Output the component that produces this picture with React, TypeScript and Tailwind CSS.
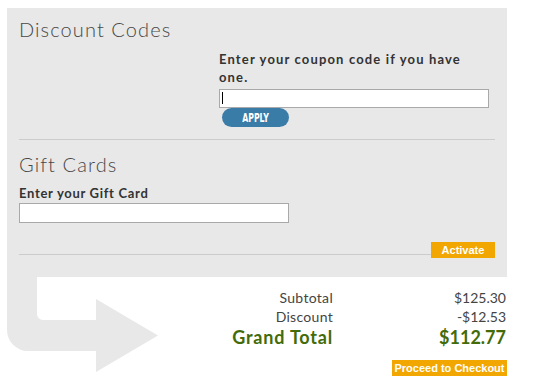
import React from "react";

const gothic = { fontFamily: "Lato, 'Open Sans', sans-serif" };

export default function App() {
  return (
    <div className="relative w-[536px] h-[384px] bg-white overflow-hidden" style={gothic}>
      <svg className="absolute left-0 top-[277px]" width="160" height="100" viewBox="0 0 160 100">
        <path
          d="M7 0 H37 V37 A6 6 0 0 0 43 43 H96 V22 L158 58.5 L96 95 V74 H28 A21 21 0 0 1 7 53 Z"
          fill="#e8e8e8"
        />
      </svg>

      <div className="relative ml-[7px] mt-[8px] w-[500px] bg-[#e8e8e8] px-[12px] pt-[9px] pb-[19px]">
        <h2 className="text-[20px] leading-[24px] tracking-[1.1px] text-[#474747] font-light">Discount Codes</h2>

        <div className="ml-[200px] mt-[9px] w-[270px]">
          <p className="w-[266px] text-[13px] leading-[18px] font-bold tracking-[1.15px] text-[#333]">
            Enter your coupon code if you have one.
          </p>
          <div className="relative mt-[3px]">
            <input
              type="text"
              className="block w-[270px] h-[19px] border border-[#a9a9a9] bg-white outline-none"
            />
            <span className="absolute left-[3px] top-[3px] w-[1px] h-[12px] bg-black" />
          </div>
          <button className="ml-[3px] flex h-[19px] w-[67px] items-center justify-center rounded-full bg-[#3a7ca8]">
            <span
              className="inline-block scale-x-[0.72] text-[12px] font-bold leading-none text-white"
              style={{ fontFamily: "'DejaVu Sans Condensed', 'DejaVu Sans', sans-serif" }}
            >
              APPLY
            </span>
          </button>
        </div>

        <div className="mt-[12px] h-px bg-[#cccccc]" />

        <h2 className="mt-[12px] text-[20px] leading-[24px] tracking-[1.1px] text-[#474747] font-light">Gift Cards</h2>
        <p className="mt-[8px] text-[13px] leading-[18px] font-bold tracking-[0.7px] text-[#333]">Enter your Gift Card</p>
        <input
          type="text"
          className="mt-[1px] block w-[270px] h-[20px] border border-[#a9a9a9] bg-white outline-none"
        />

        <div className="mt-[19px] flex items-end">
          <div className="mb-[3px] h-px flex-1 bg-[#cccccc]" />
          <button
            className="flex h-[16px] w-[64px] items-center justify-center bg-[#f2a600] text-[11px] font-bold leading-none text-white"
            style={{ fontFamily: "'Liberation Sans', Arial, sans-serif" }}
          >
            Activate
          </button>
        </div>
      </div>

      <div className="relative ml-[7px] mt-[11px] w-[499px]">
        <div className="grid grid-cols-[326px_173px] text-right">
          <div className="text-[14px] leading-[19px] tracking-[0.3px] text-[#444]">Subtotal</div>
          <div className="text-[14px] leading-[19px] text-[#444]">$125.30</div>
          <div className="text-[14px] leading-[19px] tracking-[0.3px] text-[#444]">Discount</div>
          <div className="text-[14px] leading-[19px] text-[#444]">-$12.53</div>
          <div className="text-[18px] leading-[22px] font-bold tracking-[0.8px] text-[#436b08]">Grand Total</div>
          <div className="text-[18px] leading-[22px] font-bold text-[#436b08]">$112.77</div>
        </div>
        <div className="mt-[12px] flex justify-end">
          <button
            className="mr-[-1px] flex h-[16px] w-[115px] items-center justify-center bg-[#f2a600] text-[11px] font-bold leading-none text-white"
            style={{ fontFamily: "'Liberation Sans', Arial, sans-serif" }}
          >
            Proceed to Checkout
          </button>
        </div>
      </div>
    </div>
  );
}
